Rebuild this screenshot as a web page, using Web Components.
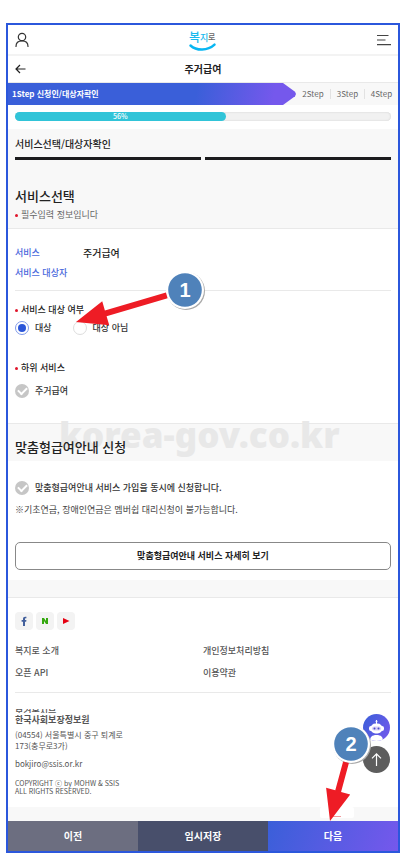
<!DOCTYPE html>
<html lang="ko">
<head>
<meta charset="utf-8">
<meta name="viewport" content="width=device-width, initial-scale=1">
<title>주거급여 - 복지로</title>
<style>
  body {
    margin: 0;
    padding: 23px 6px 10px;
    background: #fff;
    color: #222;
    font-family: "Noto Sans CJK KR", "Noto Sans", sans-serif;
    font-size: 9px;
    line-height: 14px;
    --gutter: 7px;
    --blue: #3a5fd9;
    --violet: #7558ec;
    --pale: #f8f8f8;
    --line: #e9e9e9;
  }
</style>
</head>
<body>
<welfare-page></welfare-page>
<script>
  // shared base: renders the static html of the class in an open shadow root
  class Base extends HTMLElement {
    constructor() {
      super()
      let shadow = this.attachShadow({ mode: 'open' })
      shadow.innerHTML = `<style>
      *{
        box-sizing:border-box;
      }
      :host{
        display:block;
        box-sizing:border-box;
      }
      button{
        font:inherit;
        color:inherit;
        margin:0;
        padding:0;
        border:0;
        background:none;
        cursor:pointer;
      }
      a{
        color:inherit;
        text-decoration:none;
      }
      svg{
        display:block;
      }
      </style>` + this.render()
    }
    render() { return '<slot></slot>' }
  }

  customElements.define('welfare-header', class extends Base {
    render() {
      return `<style>
      header{
        display:flex;
        align-items:center;
        justify-content:space-between;
        height:31px;
        padding:0 var(--gutter);
        border-bottom:2px solid #f3f3f3;
      }
      nav{
        display:grid;
        grid-template-columns:1fr auto 1fr;
        align-items:center;
        height:27px;
        padding:0 var(--gutter);
        border-bottom:1px solid var(--line);
      }
      nav button{
        justify-self:start;
      }
      h1{
        margin:0;
        font-size:10px;
        font-weight:700;
      }
      </style>
      <header>
        <button aria-label="로그인">
          <svg width="14" height="16" viewBox="0 0 14 16" fill="none" stroke="#333" stroke-width="1.2" stroke-linecap="round">
            <circle cx="7" cy="5" r="3.7"/>
            <path d="M1 14.5c0-3.500 2.400-5.600 6-5.600s6 2.100 6 5.600"/>
          </svg>
        </button>
        <a href="#" aria-label="복지로">
          <svg width="30" height="25" viewBox="0 0 30 25" font-family="Noto Sans CJK KR, sans-serif" font-weight="500">
            <text x="1" y="15" font-size="12" fill="#17b9ee">복</text>
            <text x="12" y="14" font-size="9" fill="#17b9ee">지</text>
            <text x="20" y="13" font-size="8" fill="#666">로</text>
            <path d="M2.500 18.500c6 5.500 17 5.700 24-.8" fill="none" stroke="#08b6f2" stroke-width="2.500" stroke-linecap="round"/>
          </svg>
        </a>
        <button aria-label="메뉴">
          <svg width="14" height="12" viewBox="0 0 14 12" stroke="#444" stroke-width="1.2">
            <path d="M0 1.500h11.500M0 6h8.500M0 10.700h14"/>
          </svg>
        </button>
      </header>
      <nav>
        <button aria-label="뒤로">
          <svg width="11" height="10" viewBox="0 0 11 10" fill="none" stroke="#222" stroke-width="1.2">
            <path d="M10.500 5H1.200M5 1L1 5l4 4"/>
          </svg>
        </button>
        <h1>주거급여</h1>
      </nav>`
    }
  })

  customElements.define('step-bar', class extends Base {
    render() {
      return `<style>
      ol{
        display:flex;
        align-items:center;
        height:22px;
        margin:0;
        padding:0;
        list-style:none;
        background:var(--pale);
        font-size:8px;
        color:#666;
      }
      li{
        flex:0 0 34px;
        text-align:center;
        line-height:10px;
      }
      li + li + li{
        border-left:1px solid #e2e2e2;
      }
      .on{
        flex:1;
        padding-left:4px;
        line-height:22px;
        text-align:left;
        font-weight:700;
        color:#fff;
        background:linear-gradient(100deg,var(--blue) 65%,var(--violet) 92%);
        clip-path:polygon(0 0,calc(100% - 13px) 0,calc(100% - 1px) 40%,100% 50%,calc(100% - 1px) 60%,calc(100% - 13px) 100%,0 100%);
      }
      </style>
      <ol>
        <li class="on" aria-current="step">1Step 신청인/대상자확인</li>
        <li>2Step</li>
        <li>3Step</li>
        <li>4Step</li>
      </ol>`
    }
  })

  customElements.define('progress-line', class extends Base {
    static observedAttributes = ['value']
    render() {
      return `<style>
      :host{
        padding:7px var(--gutter) 8px;
      }
      #track{
        height:9px;
        border-radius:5px;
        background:#f1f1f1;
        box-shadow:inset 0 0 2px #ccc;
      }
      #bar{
        height:9px;
        border-radius:5px;
        background:#31c4d8;
        color:#fff;
        font-size:7px;
        font-weight:500;
        line-height:9px;
        text-align:center;
      }
      </style>
      <div id="track" role="progressbar" aria-label="진행률"><div id="bar"></div></div>`
    }
    attributeChangedCallback(name, old, value) {
      let bar = this.shadowRoot.getElementById('bar')
      bar.style.width = value + '%'
      bar.textContent = value + '%'
      bar.parentNode.setAttribute('aria-valuenow', value)
    }
  })

  customElements.define('page-tabs', class extends Base {
    render() {
      return `<style>
      :host{
        padding:7px var(--gutter) 0;
        background:var(--pale);
      }
      h2{
        margin:0;
        height:21px;
        font-size:10px;
        line-height:16px;
        font-weight:500;
      }
      div{
        display:grid;
        grid-template-columns:1fr 1fr;
        gap:4px;
      }
      i{
        height:3px;
        background:#1c1c1e;
      }
      </style>
      <h2><slot></slot></h2>
      <div><i></i><i></i></div>`
    }
  })

  customElements.define('section-head', class extends Base {
    render() {
      return `<style>
      :host{
        position:relative;
        background:var(--pale);
      }
      h2{
        position:relative;
        margin:0;
        font-size:13px;
        line-height:20px;
        font-weight:500;
        z-index:1;
      }
      </style>
      <slot name="mark"></slot>
      <h2><slot></slot></h2>
      <slot name="note"></slot>`
    }
  })

  // small text with the red dot of a required field
  customElements.define('required-label', class extends Base {
    render() {
      return `<style>
      :host{
        display:flex;
        align-items:center;
        gap:3px;
      }
      :host::before{
        content:'';
        width:3px;
        height:3px;
        border-radius:50%;
        background:#e0152b;
      }
      </style>
      <slot></slot>`
    }
  })

  customElements.define('choice-box', class extends Base {
    render() {
      let type = this.getAttribute('type')
      return `<style>
      label{
        display:flex;
        align-items:center;
        gap:6px;
        font-weight:500;
        color:#333;
      }
      input{
        appearance:none;
        flex:none;
        width:14px;
        height:14px;
        margin:0;
        border-radius:50%;
        display:grid;
        place-items:center;
      }
      input[type=radio]{
        border:1px solid #ddd;
        background:#fff;
      }
      input[type=radio]:checked{
        border-color:#7f9aea;
      }
      input[type=radio]:checked::after{
        content:'';
        width:8px;
        height:8px;
        border-radius:50%;
        background:#2b56d8;
      }
      input[type=checkbox]{
        background:#c6c6c6;
      }
      input[type=checkbox]::after{
        content:'';
        width:7px;
        height:4px;
        margin-bottom:2px;
        border:solid #fff;
        border-width:0 0 2px 2px;
        transform:rotate(-45deg);
      }
      </style>
      <label><input type="${type}" name="choice" ${this.hasAttribute('checked') ? 'checked' : ''}><span><slot></slot></span></label>`
    }
  })

  // numbered marker with an arrow, dx and dy give the arrow tip from the circle centre
  customElements.define('guide-mark', class extends Base {
    render() {
      let dx = +this.getAttribute('dx')
      let dy = +this.getAttribute('dy')
      let len = Math.hypot(dx, dy)
      let deg = Math.atan2(dy, dx) * 180 / Math.PI
      return `<style>
      :host{
        position:absolute;
        width:40px;
        height:40px;
        z-index:3;
        pointer-events:none;
      }
      svg{
        overflow:visible;
      }
      </style>
      <svg width="40" height="40" viewBox="-20 -20 40 40">
        <circle cx="1" cy="1" r="19" fill="#aaa"/>
        <circle r="19" fill="#fff"/>
        <circle r="16.800" fill="#4f82ba"/>
        <path transform="rotate(${deg})" fill="#ee1c25" d="M19-3H${len - 31}V-12.500L${len} 0L${len - 31} 12.500V3H19z"/>
        <text y="7" text-anchor="middle" font-family="Liberation Sans, sans-serif" font-size="20" font-weight="700" fill="#fff">${this.getAttribute('no')}</text>
      </svg>`
    }
  })

  customElements.define('service-form', class extends Base {
    render() {
      return `<style>
      .info{
        margin:0 var(--gutter);
        padding:17px 0 10px;
        border-bottom:1px solid var(--line);
      }
      dl{
        display:grid;
        grid-template-columns:68px 1fr;
        row-gap:6px;
        margin:0;
      }
      dt{
        color:#4a68dc;
        font-weight:500;
      }
      dd{
        margin:0;
        font-size:10px;
        font-weight:500;
      }
      fieldset{
        margin:0;
        padding:0 var(--gutter);
        border:0;
      }
      legend{
        padding:0;
        font-weight:500;
      }
      .row{
        display:flex;
        gap:21px;
      }
      .target{
        position:relative;
        padding-top:12px;
      }
      .target .row{
        padding-top:4px;
      }
      .sub{
        padding:26px 0 25px;
      }
      .sub .row{
        padding-top:9px;
      }
      .top{
        padding:26px var(--gutter) 4px;
        border-bottom:1px solid var(--line);
      }
      .top required-label{
        color:#666;
        line-height:18px;
      }
      .title{
        padding:13px var(--gutter) 4px;
        border-top:1px solid var(--line);
      }
      .mark{
        position:absolute;
        left:51px;
        top:-12px;
        font:900 35px/46px "Noto Sans",sans-serif;
        color:#e8e8e8;
        white-space:nowrap;
      }
      .agree{
        padding:20px var(--gutter) 10px;
      }
      p{
        margin:8px 0 25px;
        color:#444;
      }
      .more{
        width:100%;
        height:28px;
        border:1px solid #888;
        border-radius:5px;
        font-weight:700;
      }
      .gap{
        height:17px;
        background:var(--pale);
      }
      guide-mark{
        left:157px;
        top:-21px;
      }
      </style>
      <section-head class="top">
        서비스선택
        <required-label slot="note">필수입력 정보입니다</required-label>
      </section-head>
      <div class="info">
        <dl>
          <dt>서비스</dt><dd>주거급여</dd>
          <dt>서비스 대상자</dt><dd></dd>
        </dl>
      </div>
      <div class="target">
        <fieldset>
          <legend><required-label>서비스 대상 여부</required-label></legend>
          <div class="row">
            <choice-box type="radio" checked>대상</choice-box>
            <choice-box type="radio">대상 아님</choice-box>
          </div>
        </fieldset>
        <guide-mark no="1" dx="-109" dy="32"></guide-mark>
      </div>
      <div class="sub">
        <fieldset>
          <legend><required-label>하위 서비스</required-label></legend>
          <div class="row"><choice-box type="checkbox">주거급여</choice-box></div>
        </fieldset>
      </div>
      <section-head class="title">
        맞춤형급여안내 신청
        <div slot="mark" class="mark" aria-hidden="true">korea-gov.co.kr</div>
      </section-head>
      <div class="agree">
        <choice-box type="checkbox">맞춤형급여안내 서비스 가입을 동시에 신청합니다.</choice-box>
        <p>※기초연금, 장애인연금은 멤버쉽 대리신청이 불가능합니다.</p>
        <button class="more">맞춤형급여안내 서비스 자세히 보기</button>
      </div>
      <div class="gap"></div>`
    }
  })

  customElements.define('site-footer', class extends Base {
    render() {
      return `<style>
      footer{
        position:relative;
        padding:14px var(--gutter) 12px;
        border-top:1px solid var(--line);
        color:#555;
      }
      .sns{
        display:flex;
        gap:3px;
      }
      .sns a{
        display:grid;
        place-items:center;
        width:18px;
        height:18px;
        border-radius:4px;
        background:#f3f3f3;
      }
      .links{
        display:grid;
        grid-template-columns:1fr 1fr;
        row-gap:8px;
        padding:14px 0 12px;
        border-bottom:1px solid var(--line);
        font-weight:500;
      }
      address{
        padding-top:16px;
        font-style:normal;
        font-size:8px;
        line-height:11px;
      }
      .cut{
        display:flex;
        align-items:center;
        height:4px;
        overflow:hidden;
        font-size:9px;
        font-weight:500;
      }
      strong{
        display:block;
        font-size:9px;
        line-height:14px;
      }
      .street{
        padding-top:2px;
      }
      .mail{
        display:block;
        margin:6px 0 8px;
        line-height:14px;
      }
      small{
        display:block;
        font-size:7px;
        line-height:8px;
      }
      .float{
        position:absolute;
        right:8px;
        bottom:34px;
        display:grid;
        gap:5px;
      }
      .float button{
        width:27px;
        height:27px;
        border-radius:50%;
        overflow:hidden;
      }
      .bot{
        background:linear-gradient(120deg,var(--blue),var(--violet));
      }
      .up{
        background:#5d5d5d;
      }
      .end{
        height:14px;
        background:var(--pale);
      }
      </style>
      <footer>
        <div class="sns">
          <a href="#" aria-label="페이스북"><svg width="10" height="10" viewBox="0 0 10 10"><path d="M4 10V5.800H2.600V4H4V2.800C4 1 5 .4 7.400.7v1.600C6.300 2.200 6 2.400 6 3v1h1.400L7.200 5.800H6V10z" fill="#43609c"/></svg></a>
          <a href="#" aria-label="네이버 블로그"><svg width="8" height="8" viewBox="0 0 8 8"><path d="M1 1h2l2 3V1h2v6H5L3 4v3H1z" fill="#35a80f"/></svg></a>
          <a href="#" aria-label="유튜브"><svg width="8" height="8" viewBox="0 0 8 8"><path d="M1 1l6.500 3L1 7z" fill="#e60012"/></svg></a>
        </div>
        <div class="links">
          <a href="#">복지로 소개</a><a href="#">개인정보처리방침</a>
          <a href="#">오픈 API</a><a href="#">이용약관</a>
        </div>
        <address>
          <div class="cut">보건복지부</div>
          <strong>한국사회보장정보원</strong>
          <div class="street">(04554) 서울특별시 중구 퇴계로<br>173(충무로3가)</div>
          <a class="mail" href="mailto:bokjiro@ssis.or.kr">bokjiro@ssis.or.kr</a>
          <small>COPYRIGHT ⓒ by MOHW &amp; SSIS<br>ALL RIGHTS RESERVED.</small>
        </address>
        <div class="float">
          <button class="bot" aria-label="챗봇">
            <svg width="27" height="27" viewBox="0 0 27 27" fill="#fff">
              <path d="M13 6h1v4h-1z"/><circle cx="13.500" cy="7.500" r="1"/>
              <rect x="6" y="12" width="15" height="5" rx="2"/>
              <rect x="7.500" y="9.500" width="12" height="10" rx="5"/>
              <rect x="9" y="12.500" width="9" height="4" rx="2" fill="#d9cff8"/>
              <circle cx="11.500" cy="14.500" r="1" fill="#4a4fc8"/><circle cx="15.500" cy="14.500" r="1" fill="#4a4fc8"/>
              <path d="M7 27c0-4 2-6 6.500-6s6.500 2 6.500 6z"/>
            </svg>
          </button>
          <button class="up" aria-label="맨 위로">
            <svg width="27" height="27" viewBox="0 0 27 27" fill="none" stroke="#fff" stroke-width="1.200"><path d="M13.500 20V8M9 12.300l4.500-4.500 4.500 4.500"/></svg>
          </button>
        </div>
      </footer>
      <div class="end"></div>`
    }
  })

  customElements.define('action-bar', class extends Base {
    render() {
      return `<style>
      :host{
        position:relative;
        display:grid;
        grid-template-columns:repeat(3,1fr);
        height:30px;
        color:#fff;
        font-size:10px;
        font-weight:700;
      }
      .prev{
        background:#6c6e80;
      }
      .save{
        background:#484f6b;
      }
      .next{
        background:linear-gradient(110deg,var(--blue),var(--violet));
      }
      .hint{
        position:absolute;
        right:44px;
        top:-14px;
        width:34px;
        height:11px;
        border-radius:2px;
        background:#fff;
      }
      .hint::after{
        content:'';
        display:block;
        width:8px;
        height:1px;
        margin:9px auto 0;
        background:#f39a9d;
      }
      guide-mark{
        right:27px;
        top:-97px;
      }
      </style>
      <button class="prev">이전</button>
      <button class="save">임시저장</button>
      <button class="next">다음</button>
      <div class="hint"></div>
      <guide-mark no="2" dx="-21" dy="77"></guide-mark>`
    }
  })

  customElements.define('welfare-page', class extends Base {
    render() {
      return `<style>
      :host{
        border:2px solid #2b57dc;
        background:#fff;
      }
      </style>
      <welfare-header></welfare-header>
      <step-bar></step-bar>
      <progress-line value="56"></progress-line>
      <page-tabs>서비스선택/대상자확인</page-tabs>
      <service-form></service-form>
      <site-footer></site-footer>
      <action-bar></action-bar>`
    }
  })
</script>
</body>
</html>
